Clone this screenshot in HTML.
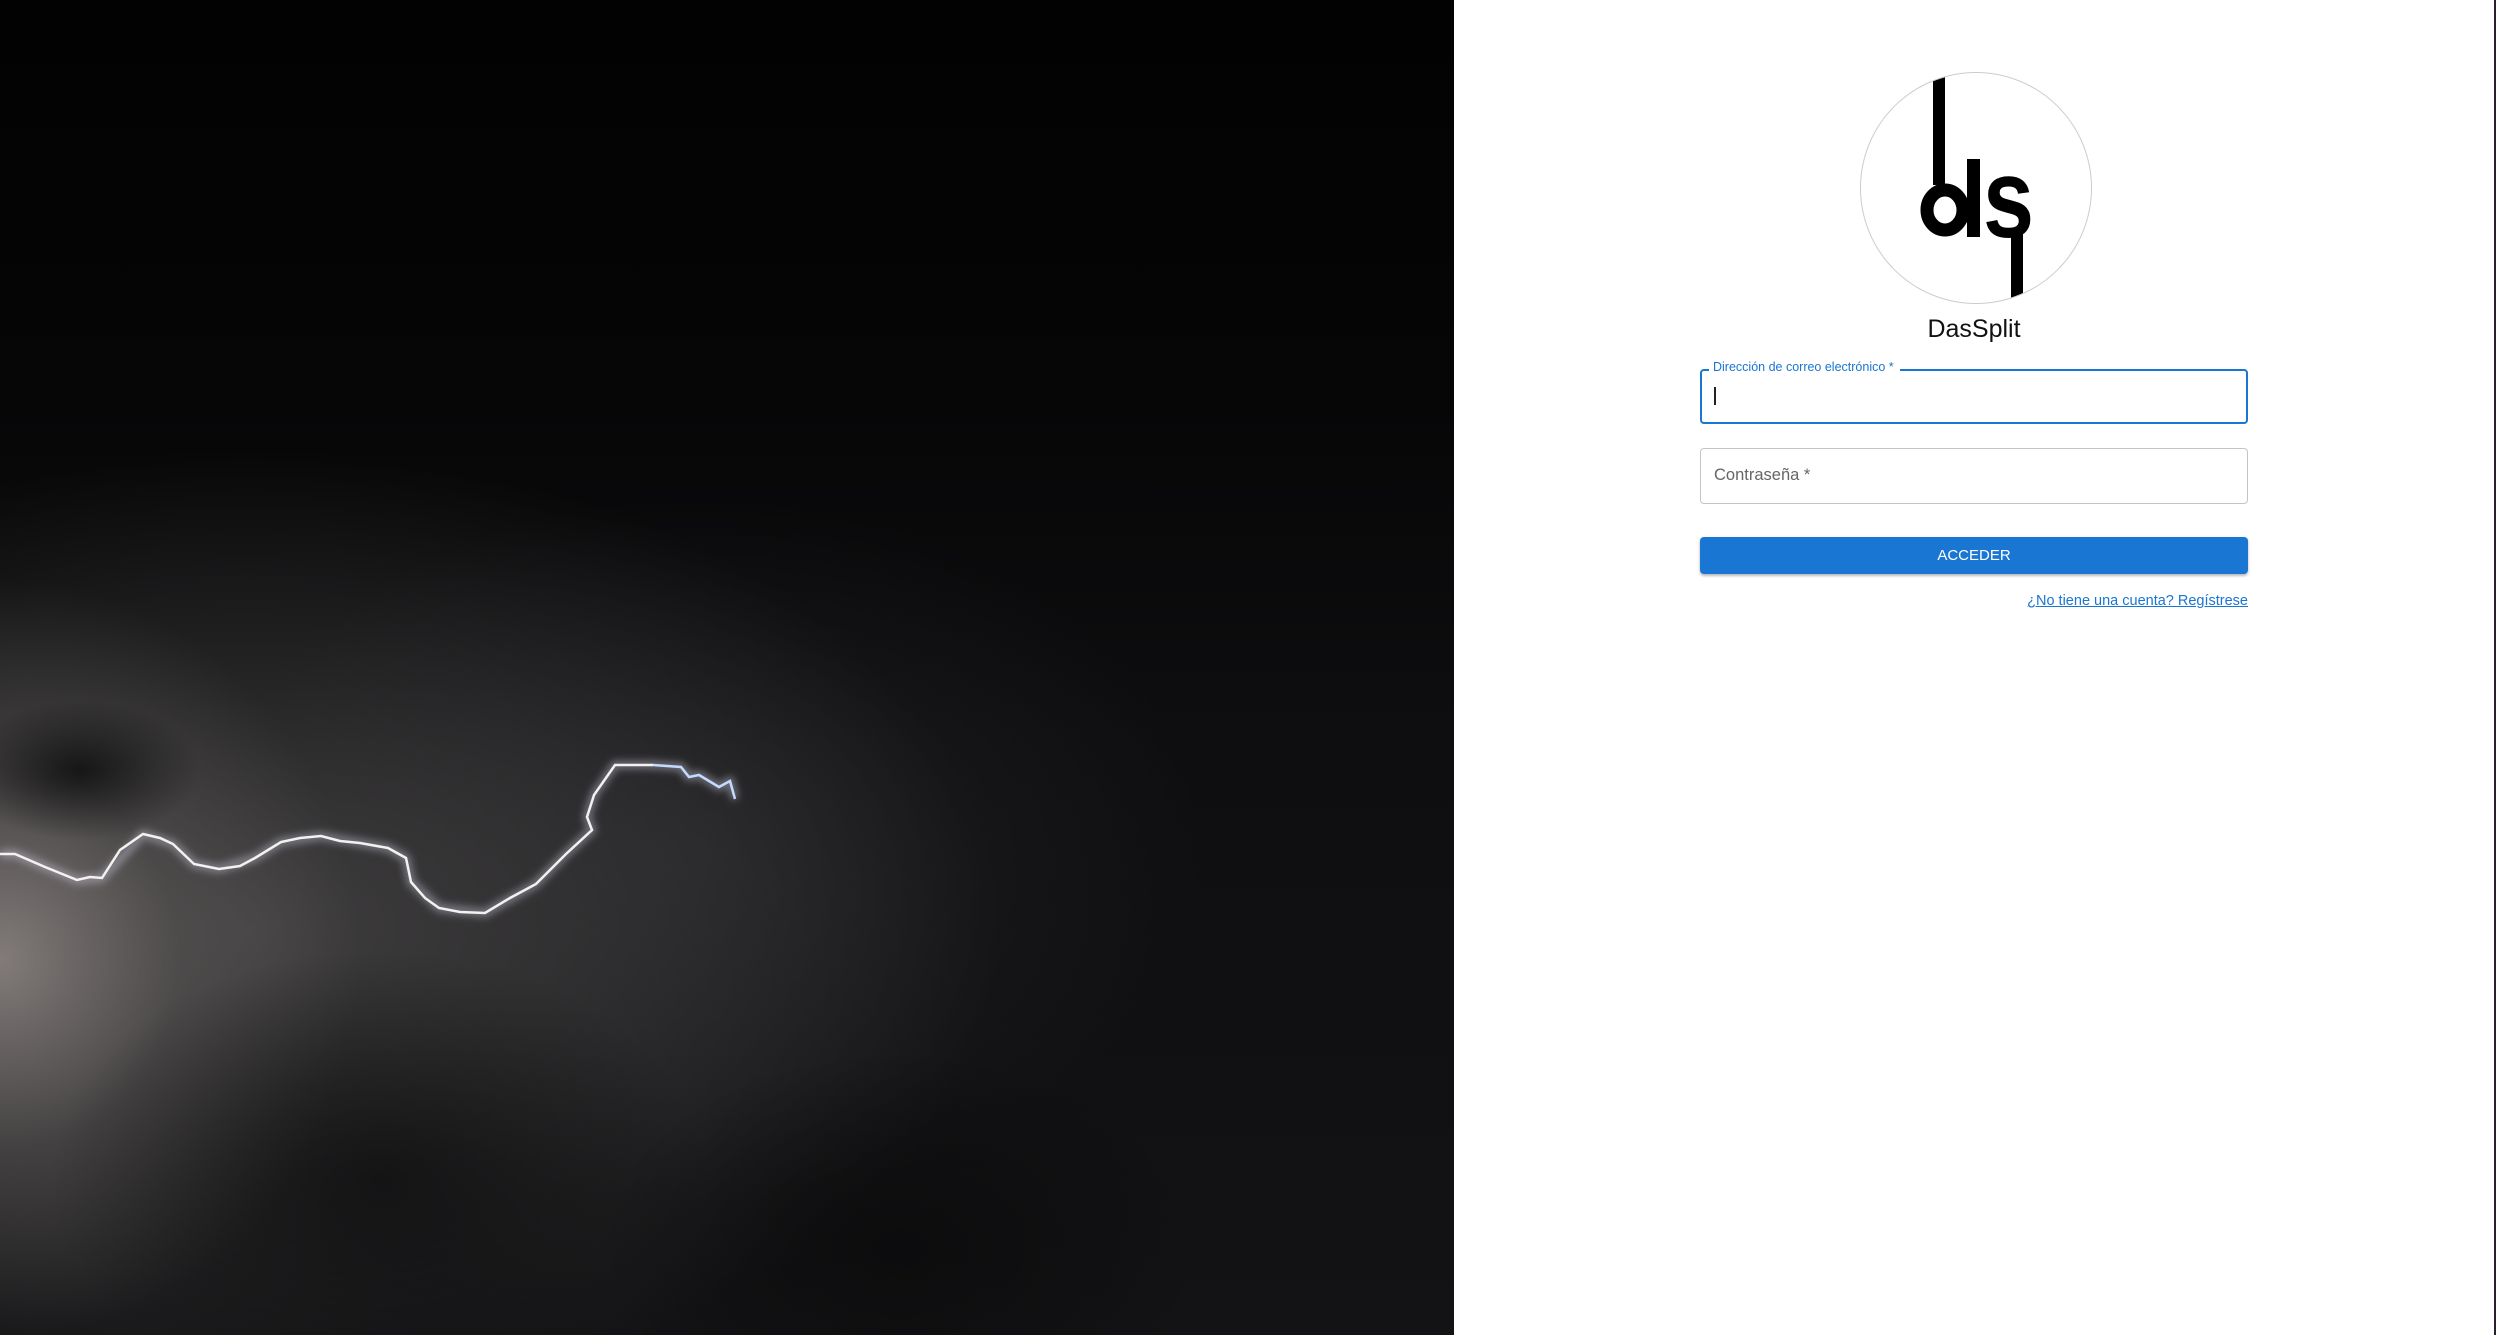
<!DOCTYPE html>
<html><head><meta charset="utf-8">
<style>
html,body{margin:0;padding:0;width:2496px;height:1335px;overflow:hidden;background:#fff;font-family:"Liberation Sans",Arial,sans-serif}
#left{position:absolute;left:0;top:0;width:1454px;height:1335px;overflow:hidden;
background:
radial-gradient(ellipse 120px 70px at 80px 770px, rgba(8,8,8,0.75), rgba(0,0,0,0) 100%),
radial-gradient(ellipse 330px 230px at 380px 1180px, rgba(12,12,13,0.7), rgba(0,0,0,0) 100%),
radial-gradient(ellipse 300px 200px at 900px 1250px, rgba(8,8,9,0.6), rgba(0,0,0,0) 100%),
radial-gradient(ellipse 360px 380px at 0px 960px, rgba(150,142,140,0.8), rgba(100,96,95,0.45) 50%, rgba(0,0,0,0) 100%),
radial-gradient(ellipse 750px 480px at 250px 930px, rgba(80,78,78,0.75), rgba(0,0,0,0) 100%),
radial-gradient(ellipse 500px 350px at 700px 850px, rgba(40,40,44,0.6), rgba(0,0,0,0) 100%),
linear-gradient(180deg,#020202 0%,#060607 30%,#0e0e10 55%,#131315 100%);}
#strip{position:absolute;right:0;top:0;width:2px;height:1335px;background:#2a1f30}
.logo{position:absolute;left:1860px;top:72px;width:232px;height:232px;border-radius:50%;border:1.5px solid #ccc;box-sizing:border-box;overflow:hidden;background:#fff}
.title{position:absolute;left:1700px;width:548px;top:315px;text-align:center;font-size:25px;color:#111}
.field{position:absolute;left:1700px;width:548px;box-sizing:border-box;border-radius:4px}
.f1{top:369px;height:55px;border:2px solid #1976d2}
.f2{top:448px;height:56px;border:1px solid #c4c4c4}
.lbl{position:absolute;left:1709px;top:360px;font-size:12.5px;color:#1976d2;background:#fff;padding:0 6px 0 4px}
.caret{position:absolute;left:1714px;top:387px;width:1.5px;height:18px;background:#222}
.ph{position:absolute;left:1714px;top:466px;font-size:16.5px;color:#666}
.btn{position:absolute;left:1700px;top:537px;width:548px;height:37px;background:#1976d2;border-radius:4px;color:#fff;font-size:15px;text-align:center;line-height:37px;box-shadow:0 2px 2px rgba(0,0,0,0.2),0 1px 4px rgba(0,0,0,0.12)}
.link{position:absolute;right:248px;top:593px;font-size:14.5px;color:#1976d2;text-decoration:underline}
</style></head><body>
<div id="left">
<svg width="1454" height="1335" style="position:absolute;left:0;top:0">
<defs><filter id="g" x="-20%" y="-20%" width="140%" height="140%"><feGaussianBlur stdDeviation="4"/></filter></defs>
<polyline fill="none" stroke="rgba(210,210,230,0.45)" stroke-width="8" filter="url(#g)" points="0,854 15,854 77,880 102,878 143,834 173,844 194,864 219,869 255,858 281,842 321,836 388,848 406,858 411,882 439,908 485,913 536,884 566,854 592,830 587,817 594,795 615,765 653,765 681,767 689,777 699,775 719,787 730,781 735,799"/>
<polyline fill="none" stroke="#f4f2f0" stroke-width="2.5" points="0,854 15,854 45,867 77,880 90,877 102,878 120,850 143,834 160,838 173,844 194,864 219,869 240,866 255,858 281,842 300,838 321,836 340,841 360,843 388,848 406,858 411,882 425,898 439,908 460,912 485,913 510,898 536,884 566,854 592,830 587,817 594,795 615,765 653,765"/>
<polyline fill="none" stroke="#c4daff" stroke-width="2.5" points="653,765 681,767 689,777 699,775 719,787 730,781 735,799"/>
</svg>
</div>
<div id="strip"></div>
<div class="logo">
<svg width="232" height="232" viewBox="0 0 232 232">
<rect x="72" y="0" width="12" height="112" fill="#000"/>
<ellipse cx="84" cy="137" rx="18" ry="20" fill="none" stroke="#000" stroke-width="13"/>
<rect x="106" y="86" width="13" height="78" fill="#000"/>
<text x="0" y="0" transform="translate(122,164) scale(0.82,1)" font-family="Liberation Sans,Arial,sans-serif" font-weight="bold" font-size="112" fill="#000">s</text>
<rect x="150" y="158" width="12" height="90" fill="#000"/>
</svg>
</div>
<div class="title">DasSplit</div>
<div class="field f1"></div>
<div class="lbl">Dirección de correo electrónico *</div>
<div class="caret"></div>
<div class="field f2"></div>
<div class="ph">Contraseña *</div>
<div class="btn">ACCEDER</div>
<div class="link">¿No tiene una cuenta? Regístrese</div>
</body></html>
